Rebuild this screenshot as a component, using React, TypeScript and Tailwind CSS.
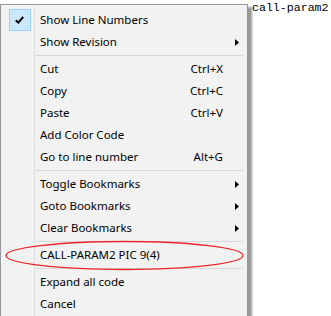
import React from 'react';

type Item =
  | { kind: 'sep' }
  | { kind: 'item'; label: string; shortcut?: string; sub?: boolean; checked?: boolean };

const items: Item[] = [
  { kind: 'item', label: 'Show Line Numbers', checked: true },
  { kind: 'item', label: 'Show Revision', sub: true },
  { kind: 'sep' },
  { kind: 'item', label: 'Cut', shortcut: 'Ctrl+X' },
  { kind: 'item', label: 'Copy', shortcut: 'Ctrl+C' },
  { kind: 'item', label: 'Paste', shortcut: 'Ctrl+V' },
  { kind: 'item', label: 'Add Color Code' },
  { kind: 'item', label: 'Go to line number', shortcut: 'Alt+G' },
  { kind: 'sep' },
  { kind: 'item', label: 'Toggle Bookmarks', sub: true },
  { kind: 'item', label: 'Goto Bookmarks', sub: true },
  { kind: 'item', label: 'Clear Bookmarks', sub: true },
  { kind: 'sep' },
  { kind: 'item', label: 'CALL-PARAM2 PIC 9(4)' },
  { kind: 'sep' },
  { kind: 'item', label: 'Expand all code' },
  { kind: 'item', label: 'Cancel' },
];

const font = { fontFamily: '"Segoe UI", "Noto Sans", sans-serif' };

const Arrow = () => (
  <svg width="4" height="7" viewBox="0 0 4 7" className="block">
    <path d="M0 0 L4 3.5 L0 7 Z" fill="#000" />
  </svg>
);

const MenuRow = ({ item }: { item: Item }) => {
  if (item.kind === 'sep') {
    return (
      <div className="flex h-[5px] items-center pl-[33px] pr-[4px]">
        <div className="h-px flex-1 bg-[#d7d7d7]" />
      </div>
    );
  }
  return (
    <div className="relative flex h-[22px] items-center text-[11.5px] text-black">
      <div className="flex w-[34px] items-center justify-center self-stretch pl-[3px]">
        {item.checked && (
          <div className="flex h-[22px] w-[22px] items-center justify-center border border-[#99d1ff] bg-[#cce8ff]">
            <svg width="9" height="8" viewBox="0 0 9 8">
              <path d="M0.8 4.2 L3.3 6.6 L8.2 1" stroke="#000" strokeWidth="2" fill="none" />
            </svg>
          </div>
        )}
      </div>
      <span className="pl-[5px]">{item.label}</span>
      <span className="ml-auto pr-[24px]">{item.shortcut}</span>
      {item.sub && (
        <div className="absolute right-[8px] top-[8px]">
          <Arrow />
        </div>
      )}
    </div>
  );
};

export default function App() {
  return (
    <div className="relative h-[316px] w-[331px] overflow-hidden bg-white">
      <div
        className="absolute left-[252px] top-[1px] text-[11.6px] leading-[14px] text-black"
        style={{ fontFamily: '"Liberation Mono", "Courier New", monospace' }}
      >
        call-param2
      </div>

      <div
        className="absolute left-0 top-[4px] w-[248px] border border-[#979797] bg-[#f2f2f2] pb-[4px] pt-[4px] shadow-[4px_3px_2px_rgba(0,0,0,0.4)]"
        style={font}
      >
        <div className="pointer-events-none absolute bottom-0 left-[33px] top-0 w-px bg-[#dedede]" />
        {items.map((item, i) => (
          <MenuRow key={i} item={item} />
        ))}
      </div>

      <svg className="pointer-events-none absolute left-0 top-0" width="331" height="316">
        <ellipse cx="124.5" cy="255.5" rx="118.5" ry="14" fill="none" stroke="#e8262b" strokeWidth="1.3" />
      </svg>
    </div>
  );
}
